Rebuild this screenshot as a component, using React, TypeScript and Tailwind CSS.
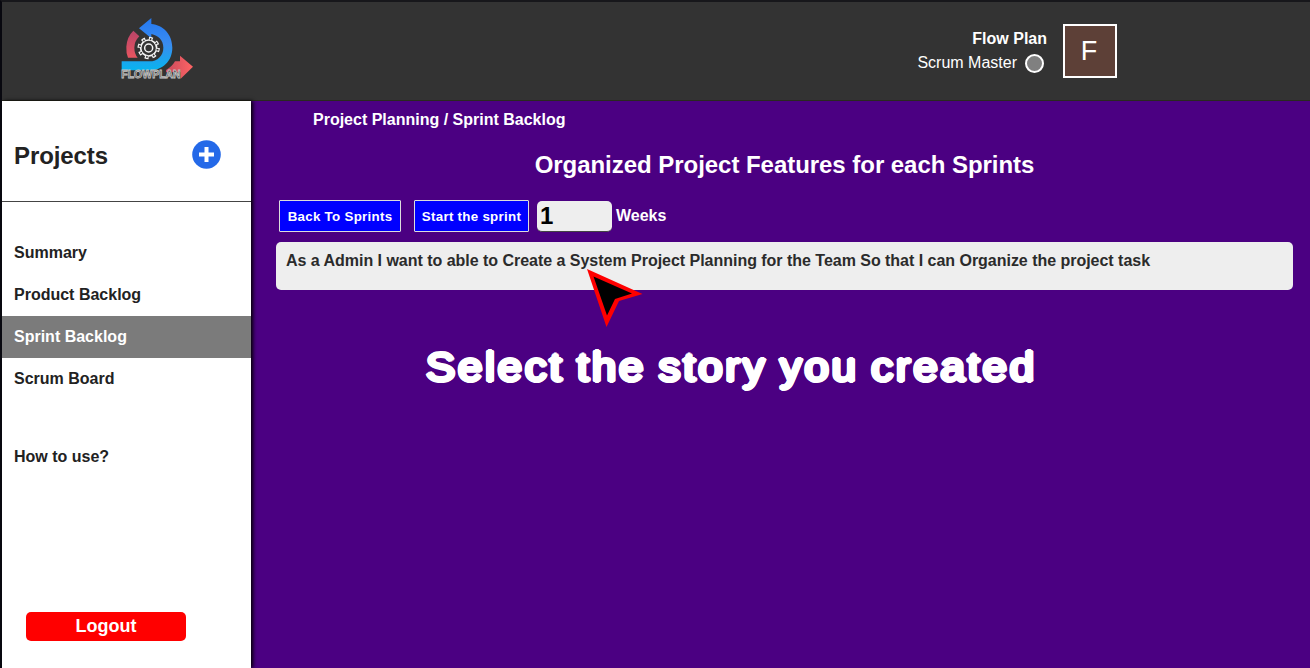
const navItems = ["Summary", "Product Backlog", "Sprint Backlog", "Scrum Board"];

function Logo() {
  return (
    <svg className="h-20 w-[95px]" viewBox="0 0 285 240">
      <defs>
        <linearGradient id="loop" x1="0" y1="0" x2="0" y2="1">
          <stop offset="0" stopColor="#2478f0" />
          <stop offset="0.5" stopColor="#3a8cf0" />
          <stop offset="1" stopColor="#08b4ee" />
        </linearGradient>
        <linearGradient id="arc" x1="0" y1="0" x2="0" y2="1">
          <stop offset="0" stopColor="#b84468" />
          <stop offset="1" stopColor="#e85560" />
        </linearGradient>
        <linearGradient id="tip" x1="0" y1="0" x2="1" y2="0">
          <stop offset="0" stopColor="#c84a5c" />
          <stop offset="1" stopColor="#ff6464" />
        </linearGradient>
      </defs>
      <path d="M70 62L88 79Q73 94 73 113Q73 131 83 143H54Q48 130 49 110Q51 80 70 62Z" fill="url(#arc)" />
      <path d="M168 180Q186 170 195 154H210V137L249 170L212 206V187H168Z" fill="url(#tip)" />
      <path d="M124 24V42C160 45 187 74 187 113C187 153 158 181 118 181H35V154H118C143 154 160 137 160 113C160 91 145 76 124 72V85L87 55Z" fill="url(#loop)" />
      <g fill="none" stroke="#f4f4f4">
        <circle cx="116" cy="114" r="29" strokeWidth="9" strokeDasharray="11.5 11.27" />
        <circle cx="116" cy="114" r="24" strokeWidth="5" />
        <circle cx="116" cy="114" r="27" stroke="#333" strokeWidth="6" strokeDasharray="4.5 16.7" strokeDashoffset="-3" />
        <circle cx="116" cy="114" r="12" strokeWidth="4.5" />
      </g>
      <text x="34" y="205" fontFamily="Liberation Sans, sans-serif" fontWeight="bold" fontSize="31" textLength="178" lengthAdjust="spacingAndGlyphs" fill="#333" stroke="#c4c4c4" strokeWidth="2.5">FLOWPLAN</text>
    </svg>
  );
}

export default function App() {
  return (
    <div className="relative flex h-[668px] w-[1310px] flex-col overflow-hidden border-l-2 border-t-2 border-t-[#17171b] border-l-[#08080f] bg-[#4b0082] font-['Liberation_Sans',Arial,sans-serif] text-white">
      <header className="flex h-[99px] shrink-0 items-start border-b border-[#29291f] bg-[#333]">
        <div className="ml-[108px] mt-2"><Logo /></div>
        <div className="ml-auto mt-[25px] w-[140px] text-right text-base leading-6">
          <div className="font-bold">Flow Plan</div>
          <div className="flex items-center justify-end gap-2">
            <span>Scrum Master</span>
            <span className="mr-[3px] size-[19px] rounded-full border-2 border-white bg-[#808080]" />
          </div>
        </div>
        <div className="ml-4 mr-[193px] mt-[22px] flex size-[54px] items-center justify-center border-2 border-white bg-[#5d4037] pr-0.5 pt-px text-[27px]">F</div>
      </header>

      <div className="flex min-h-0 flex-1">
        <aside className="z-10 flex w-[249px] shrink-0 flex-col bg-white text-[#222] shadow-[2px_0_4px_#000]">
          <div className="flex h-[101px] items-center justify-between border-b border-[#444] pl-3 pr-[30px]">
            <h1 className="mt-[9px] text-2xl font-bold tracking-[-0.1px]">Projects</h1>
            <svg className="mt-[7px] size-[29px]" viewBox="0 0 29 29">
              <circle cx="14.5" cy="14.5" r="14.3" fill="#2469e8" />
              <path d="M14.5 7V22M7 14.5H22" stroke="white" strokeWidth="4" />
            </svg>
          </div>
          <nav className="mt-[30px] text-base font-bold">
            {navItems.map((item) => (
              <div key={item} className={item === "Sprint Backlog" ? "flex h-[42px] items-center bg-[#7b7b7b] pl-3 text-white" : "flex h-[42px] items-center pl-3"}>{item}</div>
            ))}
            <div className="mt-9 flex h-[42px] items-center pl-3">How to use?</div>
          </nav>
          <button className="mb-[27px] ml-6 mt-auto h-[29px] w-40 rounded-[5px] bg-[#f00] pb-0.5 text-lg font-bold leading-none text-white">Logout</button>
        </aside>

        <main className="flex min-w-0 flex-1 flex-col pl-[25px] pr-[17px]">
          <div className="ml-[37px] mt-[7px] text-base font-bold leading-6">Project Planning / Sprint Backlog</div>
          <h2 className="mt-[17px] text-center text-2xl font-bold leading-8 tracking-[-0.04px]">Organized Project Features for each Sprints</h2>
          <div className="ml-[3px] mt-[19px] flex h-8 items-center font-bold">
            <button className="h-8 w-[122px] whitespace-nowrap rounded-[1px] border border-[#ddd] bg-[#00f] pt-0.5 text-[13.33px] tracking-[0.28px]">Back To Sprints</button>
            <button className="ml-[13px] h-8 w-[115px] whitespace-nowrap rounded-[1px] border border-[#ddd] bg-[#00f] pt-0.5 text-[13.33px] tracking-[0.28px]">Start the sprint</button>
            <div className="ml-2 flex h-[31px] w-[75px] items-center rounded-[5px] border-b border-[#444] bg-[#eee] pl-[3px] text-2xl text-black">1</div>
            <span className="ml-1 text-base">Weeks</span>
          </div>
          <div className="mt-[10px] h-12 rounded-[5px] bg-[#eee] pl-[10px] pt-[7px] text-base font-bold leading-6 text-[#2b2b2b]">
            <span className="whitespace-nowrap tracking-[-0.025px]">As a Admin I want to able to Create a System Project Planning for the Team So that I can Organize the project task</span>
          </div>
          <div className="ml-[150px] mt-[51px] origin-left scale-x-[1.09] whitespace-nowrap text-[40px] leading-[52px] tracking-[2.65px] [word-spacing:-2.4px] [text-shadow:2px_0_0_#fff,-2px_0_0_#fff,0_2px_0_#fff,0_-2px_0_#fff,1.4px_1.4px_0_#fff,-1.4px_1.4px_0_#fff,1.4px_-1.4px_0_#fff,-1.4px_-1.4px_0_#fff,1px_0_0_#fff,-1px_0_0_#fff]">Select the story you created</div>
        </main>
      </div>

      <svg className="absolute left-[584px] top-[265px] z-20 h-[65px] w-[60px]" viewBox="586 267 60 65">
        <path d="M587 269L642.5 294L619 301L606.5 327Z" fill="#f00" />
        <path d="M593.5 276.5L632 293.5L615 299L607 315.5Z" fill="#000" />
      </svg>
    </div>
  );
}
